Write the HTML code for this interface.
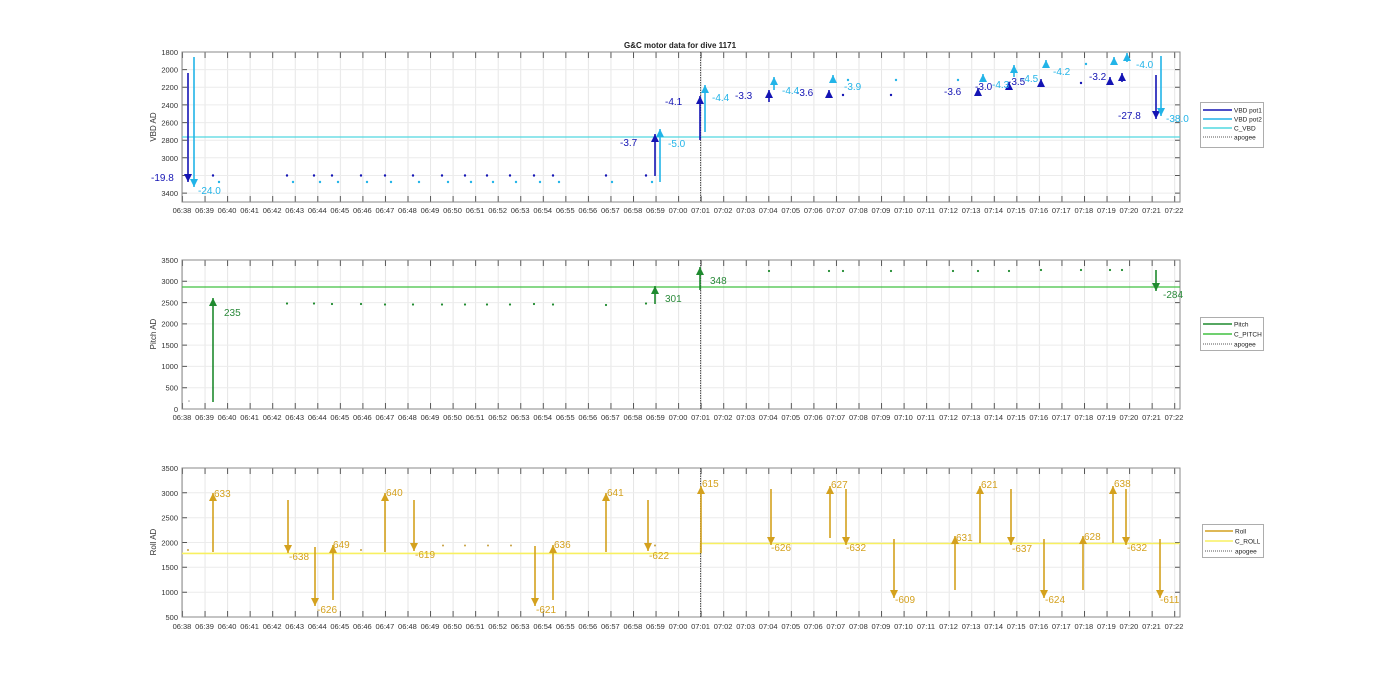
<!DOCTYPE html>
<html><head><meta charset="utf-8"><style>
html,body{margin:0;padding:0;background:#fff;width:1400px;height:693px;overflow:hidden}
svg{display:block;font-family:"Liberation Sans",sans-serif}
.tk{font-size:7.5px;fill:#333}
.xl{display:flex;position:absolute;left:170.7px;font:7.5px "Liberation Sans",sans-serif;color:#333}
.xl span{width:22.55px;text-align:center;flex:none}
.a{font-size:10px}
</style></head><body>
<div style="position:relative;width:1400px;height:693px">
<svg width="1400" height="693" viewBox="0 0 1400 693">
<defs>
<pattern id="g1" patternUnits="userSpaceOnUse" x="182" y="52" width="22.55" height="150"><line x1="0.5" y1="0" x2="0.5" y2="150" stroke="#e6e6e6" stroke-width="1"/><line x1="0.5" y1="0" x2="0.5" y2="6" stroke="#555"/><line x1="0.5" y1="144" x2="0.5" y2="150" stroke="#555"/></pattern>
<pattern id="g2" patternUnits="userSpaceOnUse" x="182" y="260" width="22.55" height="149"><line x1="0.5" y1="0" x2="0.5" y2="149" stroke="#e6e6e6"/><line x1="0.5" y1="0" x2="0.5" y2="6" stroke="#555"/><line x1="0.5" y1="143" x2="0.5" y2="149" stroke="#555"/></pattern>
<pattern id="g3" patternUnits="userSpaceOnUse" x="182" y="468" width="22.55" height="149"><line x1="0.5" y1="0" x2="0.5" y2="149" stroke="#e6e6e6"/><line x1="0.5" y1="0" x2="0.5" y2="6" stroke="#555"/><line x1="0.5" y1="143" x2="0.5" y2="149" stroke="#555"/></pattern>
<marker id="mb" markerUnits="userSpaceOnUse" markerWidth="9" markerHeight="8" refX="8" refY="4" orient="auto"><path d="M0,0 L8,4 L0,8 z" fill="#1414b4"/></marker>
<marker id="ml" markerUnits="userSpaceOnUse" markerWidth="9" markerHeight="8" refX="8" refY="4" orient="auto"><path d="M0,0 L8,4 L0,8 z" fill="#22b4e8"/></marker>
<marker id="mg" markerUnits="userSpaceOnUse" markerWidth="9" markerHeight="8" refX="8" refY="4" orient="auto"><path d="M0,0 L8,4 L0,8 z" fill="#1f8a2f"/></marker>
<marker id="my" markerUnits="userSpaceOnUse" markerWidth="9" markerHeight="8" refX="8" refY="4" orient="auto"><path d="M0,0 L8,4 L0,8 z" fill="#d4a11e"/></marker>
</defs>

<text x="680" y="48" text-anchor="middle" style="font-size:8px;font-weight:bold" fill="#222">G&amp;C motor data for dive 1171</text>

<!-- AXES 1 -->
<rect x="182" y="52" width="998" height="150" fill="url(#g1)"/>
<path d="M182 69.6H1180M182 87.3H1180M182 104.9H1180M182 122.6H1180M182 140.2H1180M182 157.8H1180M182 175.5H1180M182 193.1H1180" stroke="#ececec"/>
<path d="M182 69.6h5M182 87.3h5M182 104.9h5M182 122.6h5M182 140.2h5M182 157.8h5M182 175.5h5M182 193.1h5M1180 69.6h-5M1180 87.3h-5M1180 104.9h-5M1180 122.6h-5M1180 140.2h-5M1180 157.8h-5M1180 175.5h-5M1180 193.1h-5" stroke="#555"/>
<rect x="182" y="52" width="998" height="150" fill="none" stroke="#888"/>
<g class="tk" text-anchor="end"><text x="178" y="55">1800</text><text x="178" y="72.5">2000</text><text x="178" y="90">2200</text><text x="178" y="108">2400</text><text x="178" y="125.5">2600</text><text x="178" y="143">2800</text><text x="178" y="161">3000</text><text x="178" y="196">3400</text></g>
<text transform="translate(156,127) rotate(-90)" text-anchor="middle" style="font-size:8px" fill="#333">VBD AD</text>
<line x1="182" y1="137" x2="1180" y2="137" stroke="#50d8e0" stroke-width="1.3"/>
<line x1="700.6" y1="52" x2="700.6" y2="202" stroke="#444" stroke-dasharray="1.5,1"/>
<g fill="#1414b4"><circle cx="213" cy="175.5" r="1.2"/><circle cx="287" cy="175.5" r="1.2"/><circle cx="314" cy="175.5" r="1.2"/><circle cx="332" cy="175.5" r="1.2"/><circle cx="361" cy="175.5" r="1.2"/><circle cx="385" cy="175.5" r="1.2"/><circle cx="413" cy="175.5" r="1.2"/><circle cx="442" cy="175.5" r="1.2"/><circle cx="465" cy="175.5" r="1.2"/><circle cx="487" cy="175.5" r="1.2"/><circle cx="510" cy="175.5" r="1.2"/><circle cx="534" cy="175.5" r="1.2"/><circle cx="553" cy="175.5" r="1.2"/><circle cx="606" cy="175.5" r="1.2"/><circle cx="646" cy="175.5" r="1.2"/><circle cx="843" cy="95" r="1.2"/><circle cx="891" cy="95" r="1.2"/><circle cx="1081" cy="83" r="1.2"/></g>
<g fill="#22b4e8"><circle cx="219" cy="182" r="1.2"/><circle cx="293" cy="182" r="1.2"/><circle cx="320" cy="182" r="1.2"/><circle cx="338" cy="182" r="1.2"/><circle cx="367" cy="182" r="1.2"/><circle cx="391" cy="182" r="1.2"/><circle cx="419" cy="182" r="1.2"/><circle cx="448" cy="182" r="1.2"/><circle cx="471" cy="182" r="1.2"/><circle cx="493" cy="182" r="1.2"/><circle cx="516" cy="182" r="1.2"/><circle cx="540" cy="182" r="1.2"/><circle cx="559" cy="182" r="1.2"/><circle cx="612" cy="182" r="1.2"/><circle cx="652" cy="182" r="1.2"/><circle cx="848" cy="80" r="1.2"/><circle cx="896" cy="80" r="1.2"/><circle cx="958" cy="80" r="1.2"/><circle cx="1086" cy="64" r="1.2"/></g>
<g stroke-width="1.6" fill="none">
<line x1="188" y1="73" x2="188" y2="182" stroke="#1414b4" marker-end="url(#mb)"/>
<line x1="194" y1="57" x2="194" y2="187" stroke="#22b4e8" marker-end="url(#ml)"/>
<line x1="655" y1="176" x2="655" y2="134" stroke="#1414b4" marker-end="url(#mb)"/>
<line x1="660" y1="182" x2="660" y2="129" stroke="#22b4e8" marker-end="url(#ml)"/>
<line x1="700" y1="140" x2="700" y2="96" stroke="#1414b4" marker-end="url(#mb)"/>
<line x1="705" y1="132" x2="705" y2="85" stroke="#22b4e8" marker-end="url(#ml)"/>
<line x1="769" y1="102" x2="769" y2="90" stroke="#1414b4" marker-end="url(#mb)"/>
<line x1="774" y1="90" x2="774" y2="77" stroke="#22b4e8" marker-end="url(#ml)"/>
<line x1="829" y1="98" x2="829" y2="90" stroke="#1414b4" marker-end="url(#mb)"/>
<line x1="833" y1="83" x2="833" y2="75" stroke="#22b4e8" marker-end="url(#ml)"/>
<line x1="978" y1="96" x2="978" y2="88" stroke="#1414b4" marker-end="url(#mb)"/>
<line x1="983" y1="82" x2="983" y2="74" stroke="#22b4e8" marker-end="url(#ml)"/>
<line x1="1009" y1="90" x2="1009" y2="82" stroke="#1414b4" marker-end="url(#mb)"/>
<line x1="1014" y1="77" x2="1014" y2="65" stroke="#22b4e8" marker-end="url(#ml)"/>
<line x1="1041" y1="87" x2="1041" y2="79" stroke="#1414b4" marker-end="url(#mb)"/>
<line x1="1046" y1="68" x2="1046" y2="60" stroke="#22b4e8" marker-end="url(#ml)"/>
<line x1="1110" y1="85" x2="1110" y2="77" stroke="#1414b4" marker-end="url(#mb)"/>
<line x1="1114" y1="65" x2="1114" y2="57" stroke="#22b4e8" marker-end="url(#ml)"/>
<line x1="1122" y1="82" x2="1122" y2="73" stroke="#1414b4" marker-end="url(#mb)"/>
<line x1="1127" y1="62" x2="1127" y2="53" stroke="#22b4e8" marker-end="url(#ml)"/>
<line x1="1156" y1="75" x2="1156" y2="119" stroke="#1414b4" marker-end="url(#mb)"/>
<line x1="1161" y1="56" x2="1161" y2="116" stroke="#22b4e8" marker-end="url(#ml)"/>
</g>
<g class="a" fill="#1414b4"><text x="151" y="181">-19.8</text><text x="620" y="146">-3.7</text><text x="665" y="105">-4.1</text><text x="735" y="99">-3.3</text><text x="796" y="96">-3.6</text><text x="944" y="95">-3.6</text><text x="975" y="90">-3.0</text><text x="1008" y="85">-3.5</text><text x="1089" y="80">-3.2</text><text x="1118" y="119">-27.8</text></g>
<g class="a" fill="#22b4e8"><text x="198" y="194">-24.0</text><text x="668" y="147">-5.0</text><text x="712" y="101">-4.4</text><text x="782" y="94">-4.4</text><text x="844" y="90">-3.9</text><text x="992" y="88">-4.3</text><text x="1021" y="82">-4.5</text><text x="1053" y="75">-4.2</text><text x="1136" y="68">-4.0</text><text x="1166" y="122">-38.0</text></g>
<rect x="1200.5" y="102.5" width="63" height="45" fill="#fff" stroke="#999" stroke-width="0.8"/>
<line x1="1203" y1="110" x2="1232" y2="110" stroke="#1414b4" stroke-width="1.5"/>
<line x1="1203" y1="119" x2="1232" y2="119" stroke="#22b4e8" stroke-width="1.5"/>
<line x1="1203" y1="128" x2="1232" y2="128" stroke="#50d8e0" stroke-width="1.5"/>
<line x1="1203" y1="137" x2="1232" y2="137" stroke="#555" stroke-dasharray="1,1"/>
<g style="font-size:6.5px" fill="#222"><text x="1234" y="112.5">VBD pot1</text><text x="1234" y="121.5">VBD pot2</text><text x="1234" y="130.5">C_VBD</text><text x="1234" y="139.5">apogee</text></g>

<!-- AXES 2 -->
<rect x="182" y="260" width="998" height="149" fill="url(#g2)"/>
<path d="M182 281.3H1180M182 302.6H1180M182 323.9H1180M182 345.1H1180M182 366.4H1180M182 387.7H1180" stroke="#ececec"/>
<path d="M182 281.3h5M182 302.6h5M182 323.9h5M182 345.1h5M182 366.4h5M182 387.7h5M1180 281.3h-5M1180 302.6h-5M1180 323.9h-5M1180 345.1h-5M1180 366.4h-5M1180 387.7h-5" stroke="#555"/>
<rect x="182" y="260" width="998" height="149" fill="none" stroke="#888"/>
<g class="tk" text-anchor="end"><text x="178" y="263">3500</text><text x="178" y="284">3000</text><text x="178" y="305.5">2500</text><text x="178" y="326.5">2000</text><text x="178" y="348">1500</text><text x="178" y="369">1000</text><text x="178" y="390.5">500</text><text x="178" y="412">0</text></g>
<text transform="translate(156,334) rotate(-90)" text-anchor="middle" style="font-size:8px" fill="#333">Pitch AD</text>
<line x1="182" y1="287" x2="1180" y2="287" stroke="#40c040" stroke-width="1.3"/>
<line x1="700.6" y1="260" x2="700.6" y2="409" stroke="#444" stroke-dasharray="1.5,1"/>
<g fill="#1f8a2f"><circle cx="287" cy="303.5" r="1.1"/><circle cx="314" cy="303.5" r="1.1"/><circle cx="332" cy="304" r="1.1"/><circle cx="361" cy="304" r="1.1"/><circle cx="385" cy="304.5" r="1.1"/><circle cx="413" cy="304.5" r="1.1"/><circle cx="442" cy="304.5" r="1.1"/><circle cx="465" cy="304.5" r="1.1"/><circle cx="487" cy="304.5" r="1.1"/><circle cx="510" cy="304.5" r="1.1"/><circle cx="534" cy="304" r="1.1"/><circle cx="553" cy="304.5" r="1.1"/><circle cx="606" cy="305" r="1.1"/><circle cx="646" cy="303.5" r="1.1"/><circle cx="769" cy="271" r="1.1"/><circle cx="829" cy="271" r="1.1"/><circle cx="843" cy="271" r="1.1"/><circle cx="891" cy="271" r="1.1"/><circle cx="953" cy="271" r="1.1"/><circle cx="978" cy="271" r="1.1"/><circle cx="1009" cy="271" r="1.1"/><circle cx="1041" cy="270" r="1.1"/><circle cx="1081" cy="270" r="1.1"/><circle cx="1110" cy="270" r="1.1"/><circle cx="1122" cy="270" r="1.1"/></g>
<circle cx="189" cy="401" r="0.8" fill="#999"/>
<g stroke="#1f8a2f" stroke-width="1.6">
<line x1="213" y1="402" x2="213" y2="298" marker-end="url(#mg)"/>
<line x1="655" y1="304" x2="655" y2="286" marker-end="url(#mg)"/>
<line x1="700" y1="290" x2="700" y2="267" marker-end="url(#mg)"/>
<line x1="1156" y1="270" x2="1156" y2="291" marker-end="url(#mg)"/>
</g>
<g class="a" fill="#2a8a3a"><text x="224" y="316">235</text><text x="665" y="302">301</text><text x="710" y="284">348</text><text x="1163" y="298">-284</text></g>
<rect x="1200.5" y="317.5" width="63" height="33" fill="#fff" stroke="#999" stroke-width="0.8"/>
<line x1="1203" y1="324" x2="1232" y2="324" stroke="#1f8a2f" stroke-width="1.5"/>
<line x1="1203" y1="334" x2="1232" y2="334" stroke="#40c040" stroke-width="1.5"/>
<line x1="1203" y1="344" x2="1232" y2="344" stroke="#555" stroke-dasharray="1,1"/>
<g style="font-size:6.5px" fill="#222"><text x="1234" y="326.5">Pitch</text><text x="1234" y="336.5">C_PITCH</text><text x="1234" y="346.5">apogee</text></g>

<!-- AXES 3 -->
<rect x="182" y="468" width="998" height="149" fill="url(#g3)"/>
<path d="M182 492.8H1180M182 517.7H1180M182 542.5H1180M182 567.3H1180M182 592.2H1180" stroke="#ececec"/>
<path d="M182 492.8h5M182 517.7h5M182 542.5h5M182 567.3h5M182 592.2h5M1180 492.8h-5M1180 517.7h-5M1180 542.5h-5M1180 567.3h-5M1180 592.2h-5" stroke="#555"/>
<rect x="182" y="468" width="998" height="149" fill="none" stroke="#888"/>
<g class="tk" text-anchor="end"><text x="178" y="471">3500</text><text x="178" y="496">3000</text><text x="178" y="520.5">2500</text><text x="178" y="545.5">2000</text><text x="178" y="570">1500</text><text x="178" y="595">1000</text><text x="178" y="620">500</text></g>
<text transform="translate(156,542) rotate(-90)" text-anchor="middle" style="font-size:8px" fill="#333">Roll AD</text>
<path d="M182 553.4H700.6V543.5H1180" stroke="#f8f060" stroke-width="1.6" fill="none"/>
<line x1="700.6" y1="468" x2="700.6" y2="617" stroke="#444" stroke-dasharray="1.5,1"/>
<g fill="#c8a040"><circle cx="188" cy="550" r="1"/><circle cx="361" cy="550" r="1"/><circle cx="443" cy="545.5" r="1"/><circle cx="465" cy="545.5" r="1"/><circle cx="488" cy="545.5" r="1"/><circle cx="511" cy="545.5" r="1"/><circle cx="655" cy="545.5" r="1"/></g>
<g stroke="#d4a11e" stroke-width="1.6">
<line x1="213" y1="552" x2="213" y2="493" marker-end="url(#my)"/>
<line x1="288" y1="500" x2="288" y2="553" marker-end="url(#my)"/>
<line x1="315" y1="547" x2="315" y2="606" marker-end="url(#my)"/>
<line x1="333" y1="600" x2="333" y2="545" marker-end="url(#my)"/>
<line x1="385" y1="552" x2="385" y2="493" marker-end="url(#my)"/>
<line x1="414" y1="500" x2="414" y2="551" marker-end="url(#my)"/>
<line x1="535" y1="546" x2="535" y2="606" marker-end="url(#my)"/>
<line x1="553" y1="600" x2="553" y2="545" marker-end="url(#my)"/>
<line x1="606" y1="552" x2="606" y2="493" marker-end="url(#my)"/>
<line x1="648" y1="500" x2="648" y2="551" marker-end="url(#my)"/>
<line x1="701" y1="553" x2="701" y2="486" marker-end="url(#my)"/>
<line x1="771" y1="489" x2="771" y2="545" marker-end="url(#my)"/>
<line x1="830" y1="538" x2="830" y2="486" marker-end="url(#my)"/>
<line x1="846" y1="489" x2="846" y2="545" marker-end="url(#my)"/>
<line x1="894" y1="539" x2="894" y2="598" marker-end="url(#my)"/>
<line x1="955" y1="590" x2="955" y2="536" marker-end="url(#my)"/>
<line x1="980" y1="543" x2="980" y2="486" marker-end="url(#my)"/>
<line x1="1011" y1="489" x2="1011" y2="545" marker-end="url(#my)"/>
<line x1="1044" y1="539" x2="1044" y2="598" marker-end="url(#my)"/>
<line x1="1083" y1="590" x2="1083" y2="536" marker-end="url(#my)"/>
<line x1="1113" y1="543" x2="1113" y2="486" marker-end="url(#my)"/>
<line x1="1126" y1="489" x2="1126" y2="545" marker-end="url(#my)"/>
<line x1="1160" y1="539" x2="1160" y2="598" marker-end="url(#my)"/>
</g>
<g class="a" fill="#d4a11e"><text x="214" y="497">633</text><text x="289" y="560">-638</text><text x="317" y="613">-626</text><text x="333" y="548">649</text><text x="386" y="496">640</text><text x="415" y="558">-619</text><text x="536" y="613">-621</text><text x="554" y="548">636</text><text x="607" y="496">641</text><text x="649" y="559">-622</text><text x="702" y="487">615</text><text x="771" y="551">-626</text><text x="831" y="488">627</text><text x="846" y="551">-632</text><text x="895" y="603">-609</text><text x="956" y="541">631</text><text x="981" y="488">621</text><text x="1012" y="552">-637</text><text x="1045" y="603">-624</text><text x="1084" y="540">628</text><text x="1114" y="487">638</text><text x="1127" y="551">-632</text><text x="1160" y="603">-611</text></g>
<rect x="1202.5" y="524.5" width="61" height="33" fill="#fff" stroke="#999" stroke-width="0.8"/>
<line x1="1205" y1="531" x2="1233" y2="531" stroke="#d4a11e" stroke-width="1.5"/>
<line x1="1205" y1="541" x2="1233" y2="541" stroke="#f8f060" stroke-width="1.5"/>
<line x1="1205" y1="551" x2="1233" y2="551" stroke="#555" stroke-dasharray="1,1"/>
<g style="font-size:6.5px" fill="#222"><text x="1235" y="533.5">Roll</text><text x="1235" y="543.5">C_ROLL</text><text x="1235" y="553.5">apogee</text></g>
</svg>

<div class="xl" style="top:206px"><span>06:38</span><span>06:39</span><span>06:40</span><span>06:41</span><span>06:42</span><span>06:43</span><span>06:44</span><span>06:45</span><span>06:46</span><span>06:47</span><span>06:48</span><span>06:49</span><span>06:50</span><span>06:51</span><span>06:52</span><span>06:53</span><span>06:54</span><span>06:55</span><span>06:56</span><span>06:57</span><span>06:58</span><span>06:59</span><span>07:00</span><span>07:01</span><span>07:02</span><span>07:03</span><span>07:04</span><span>07:05</span><span>07:06</span><span>07:07</span><span>07:08</span><span>07:09</span><span>07:10</span><span>07:11</span><span>07:12</span><span>07:13</span><span>07:14</span><span>07:15</span><span>07:16</span><span>07:17</span><span>07:18</span><span>07:19</span><span>07:20</span><span>07:21</span><span>07:22</span></div>
<div class="xl" style="top:413px"><span>06:38</span><span>06:39</span><span>06:40</span><span>06:41</span><span>06:42</span><span>06:43</span><span>06:44</span><span>06:45</span><span>06:46</span><span>06:47</span><span>06:48</span><span>06:49</span><span>06:50</span><span>06:51</span><span>06:52</span><span>06:53</span><span>06:54</span><span>06:55</span><span>06:56</span><span>06:57</span><span>06:58</span><span>06:59</span><span>07:00</span><span>07:01</span><span>07:02</span><span>07:03</span><span>07:04</span><span>07:05</span><span>07:06</span><span>07:07</span><span>07:08</span><span>07:09</span><span>07:10</span><span>07:11</span><span>07:12</span><span>07:13</span><span>07:14</span><span>07:15</span><span>07:16</span><span>07:17</span><span>07:18</span><span>07:19</span><span>07:20</span><span>07:21</span><span>07:22</span></div>
<div class="xl" style="top:622px"><span>06:38</span><span>06:39</span><span>06:40</span><span>06:41</span><span>06:42</span><span>06:43</span><span>06:44</span><span>06:45</span><span>06:46</span><span>06:47</span><span>06:48</span><span>06:49</span><span>06:50</span><span>06:51</span><span>06:52</span><span>06:53</span><span>06:54</span><span>06:55</span><span>06:56</span><span>06:57</span><span>06:58</span><span>06:59</span><span>07:00</span><span>07:01</span><span>07:02</span><span>07:03</span><span>07:04</span><span>07:05</span><span>07:06</span><span>07:07</span><span>07:08</span><span>07:09</span><span>07:10</span><span>07:11</span><span>07:12</span><span>07:13</span><span>07:14</span><span>07:15</span><span>07:16</span><span>07:17</span><span>07:18</span><span>07:19</span><span>07:20</span><span>07:21</span><span>07:22</span></div>
</div>
</body></html>
